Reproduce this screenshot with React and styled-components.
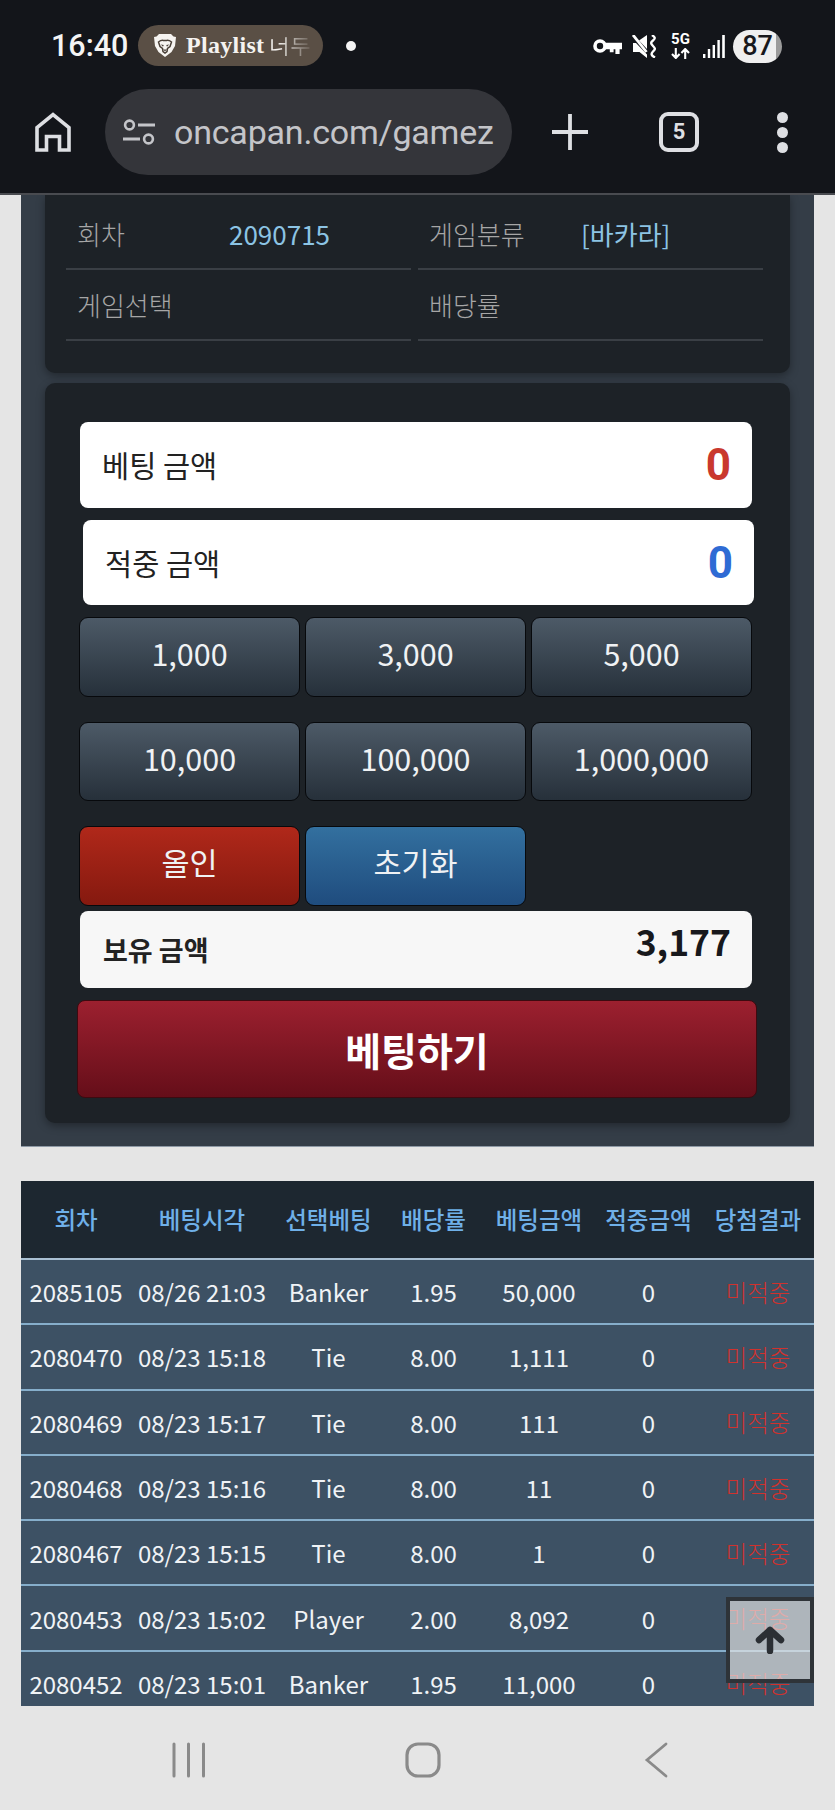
import React from "react";
import styled, {createGlobalStyle} from "styled-components";

const GlobalStyle = createGlobalStyle`
  html, body {
    margin: 0;
    padding: 0;
    background: #e5e5e5;
  }
  * {
    box-sizing: border-box;
  }
`;

const CHIPS = ["1,000", "3,000", "5,000", "10,000", "100,000", "1,000,000"];
const COLUMNS = ["회차", "베팅시각", "선택베팅", "배당률", "베팅금액", "적중금액", "당첨결과"];
const HISTORY = [
    ["2085105", "08/26 21:03", "Banker", "1.95", "50,000", "0"],
    ["2080470", "08/23 15:18", "Tie", "8.00", "1,111", "0"],
    ["2080469", "08/23 15:17", "Tie", "8.00", "111", "0"],
    ["2080468", "08/23 15:16", "Tie", "8.00", "11", "0"],
    ["2080467", "08/23 15:15", "Tie", "8.00", "1", "0"],
    ["2080453", "08/23 15:02", "Player", "2.00", "8,092", "0"],
    ["2080452", "08/23 15:01", "Banker", "1.95", "11,000", "0"],
];

const App = () => {
    return (
        <Screen>
            <GlobalStyle/>
            <BrowserHeader>
                <StatusBar>
                    <Clock>16:40</Clock>
                    <MediaPill>
                        <BraveIcon/>
                        <PillTitle>Playlist</PillTitle>
                        <PillFade>너두</PillFade>
                    </MediaPill>
                    <StatusDot/>
                    <StatusIcons>
                        <KeyIcon/>
                        <MuteIcon/>
                        <Network>
                            <NetworkLabel>5G</NetworkLabel>
                            <ArrowsIcon/>
                        </Network>
                        <SignalIcon/>
                        <Battery>87</Battery>
                    </StatusIcons>
                </StatusBar>
                <Toolbar>
                    <HomeIcon/>
                    <UrlBar>
                        <TuneIcon/>
                        <UrlText>oncapan.com/gamez</UrlText>
                    </UrlBar>
                    <PlusIcon/>
                    <TabCount>5</TabCount>
                    <MenuDots><i/><i/><i/></MenuDots>
                </Toolbar>
            </BrowserHeader>

            <Content>
                <Panel>
                    <InfoCard>
                        <InfoRow>
                            <InfoCell><InfoLabel>회차</InfoLabel><InfoValue>2090715</InfoValue></InfoCell>
                            <InfoCell><InfoLabel>게임분류</InfoLabel><InfoValue>[바카라]</InfoValue></InfoCell>
                        </InfoRow>
                        <InfoRow>
                            <InfoCell><InfoLabel>게임선택</InfoLabel><InfoValue/></InfoCell>
                            <InfoCell><InfoLabel>배당률</InfoLabel><InfoValue/></InfoCell>
                        </InfoRow>
                    </InfoCard>

                    <BetCard>
                        <AmountBox>
                            <AmountLabel>베팅 금액</AmountLabel>
                            <AmountValue $color="#c9382e">0</AmountValue>
                        </AmountBox>
                        <AmountBox $shift>
                            <AmountLabel>적중 금액</AmountLabel>
                            <AmountValue $color="#2f6bd4">0</AmountValue>
                        </AmountBox>
                        <ChipGrid>
                            {CHIPS.map(chip => <Chip key={chip}>{chip}</Chip>)}
                            <Chip $from="#b0281a" $to="#85190f">올인</Chip>
                            <Chip $from="#33709f" $to="#1f4c7e">초기화</Chip>
                        </ChipGrid>
                        <HoldBox>
                            <HoldLabel>보유 금액</HoldLabel>
                            <HoldValue>3,177</HoldValue>
                        </HoldBox>
                        <BetButton>베팅하기</BetButton>
                    </BetCard>
                </Panel>

                <HistoryTable>
                    <HeadRow>
                        {COLUMNS.map(title => <HeadCell key={title}>{title}</HeadCell>)}
                    </HeadRow>
                    {HISTORY.map(row => (
                        <BodyRow key={row[0]}>
                            {row.map((value, i) => <BodyCell key={i}>{value}</BodyCell>)}
                            <MissCell>미적중</MissCell>
                        </BodyRow>
                    ))}
                </HistoryTable>

                <TopButton><UpArrowIcon/></TopButton>
            </Content>

            <NavBar>
                <RecentIcon/>
                <NavHomeIcon/>
                <BackIcon/>
            </NavBar>
        </Screen>
    )
}

const BraveIcon = () => (
    <PillSvg viewBox="0 0 22 23">
        <path fill="#f6f4f1" d="M5 0h12l2.500 2.500L22 3l-1 9-3.500 6L11 23l-6.500-5L1 12 0 3l2.500-.5z"/>
        <path fill="none" stroke="#4a4038" strokeWidth="1.500" d="M4.500 8c3-2.500 3.800-1.500 6.500-1.500S14.500 5.500 17.500 8L16 12.500l-2.500 2-.5 3-2 1.500-2-1.500-.5-3-2.500-2z"/>
        <path fill="#4a4038" d="M6.800 10.500l3 .5-.8 1.800zM15.200 10.500l-3 .5.800 1.800zM9 15.500h4L11 17.300z"/>
    </PillSvg>
);

const KeyIcon = () => (
    <KeySvg viewBox="0 0 29 15">
        <circle cx="7" cy="7" r="5" fill="none" stroke="#fff" strokeWidth="3.600"/>
        <path fill="#fff" d="M12 3.800h17v6.400h-2.400V15h-4.200v-4.800h-1.800v3h-3.800v-3H12z"/>
    </KeySvg>
);

const MuteIcon = () => (
    <MuteSvg viewBox="0 0 24 23">
        <path fill="#fff" d="M1 8h3L15 19.500V23L7.500 17H1zM7 5.500L15 0v14z"/>
        <path stroke="#fff" strokeWidth="2.800" d="M1 0l13.500 17"/>
        <path fill="none" stroke="#fff" strokeWidth="2.400" d="M20 0c3.500 2.500 3.500 3.500 1 5.500s-2.500 3 0 5.500 2.500 3 0 5.500-1.500 4 2 6"/>
    </MuteSvg>
);

const ArrowsIcon = () => (
    <ArrowSvg viewBox="0 0 19 11">
        <path fill="none" stroke="#fff" strokeWidth="2.100" d="M4.800 0v10M1 6l3.800 4L8.600 6M14.200 11V1M10.400 5l3.800-4L18 5"/>
    </ArrowSvg>
);

const SignalIcon = () => (
    <SignalSvg viewBox="0 0 22 23">
        <rect x="0" y="19" width="2.400" height="4" fill="#fff"/>
        <rect x="4.800" y="14" width="2.400" height="9" fill="#fff"/>
        <rect x="9.600" y="10" width="2.400" height="13" fill="#fff"/>
        <rect x="14.400" y="5" width="2.400" height="18" fill="#fff"/>
        <rect x="19.200" y="0" width="2.600" height="23" fill="#fff"/>
    </SignalSvg>
);

const HomeIcon = () => (
    <ToolbarSvg $width={36} $height={40} viewBox="0 0 36 40">
        <path fill="none" stroke="#dedfe3" strokeWidth="3.600" d="M2 38V15.500L18 2.500l16 13V38h-9.500V24.500h-13V38z"/>
    </ToolbarSvg>
);

const TuneIcon = () => (
    <TuneSvg viewBox="0 0 32 26">
        <circle cx="6.500" cy="6" r="4.400" fill="none" stroke="#c4c5c9" strokeWidth="2.600"/>
        <path stroke="#c4c5c9" strokeWidth="2.800" d="M15 6h17M0 20h17"/>
        <circle cx="25.500" cy="20" r="4.400" fill="none" stroke="#c4c5c9" strokeWidth="2.600"/>
    </TuneSvg>
);

const PlusIcon = () => (
    <ToolbarSvg $width={36} $height={36} viewBox="0 0 36 36">
        <path stroke="#dedfe3" strokeWidth="3.800" d="M18 0v36M0 18h36"/>
    </ToolbarSvg>
);

const UpArrowIcon = () => (
    <ArrowUpSvg viewBox="0 0 30 28">
        <path fill="none" stroke="#2b2f34" strokeWidth="6.500" strokeLinecap="round" strokeLinejoin="round" d="M15 25V4M4 14L15 4l11 10"/>
    </ArrowUpSvg>
);

const RecentIcon = () => (
    <NavSvg $left={172} viewBox="0 0 34 36" $width={34}>
        <path stroke="#8a8a8a" strokeWidth="3" strokeLinecap="round" d="M2 2v32M16.500 2v32M31.500 2v32"/>
    </NavSvg>
);

const NavHomeIcon = () => (
    <NavSvg $left={199} viewBox="0 0 36 36" $width={36}>
        <rect x="2" y="2" width="32" height="32" rx="11" fill="none" stroke="#8a8a8a" strokeWidth="3.200"/>
    </NavSvg>
);

const BackIcon = () => (
    <NavSvg $left={203} viewBox="0 0 24 36" $width={24}>
        <path fill="none" stroke="#8a8a8a" strokeWidth="2.800" strokeLinecap="round" d="M22 2L3 18l19 16"/>
    </NavSvg>
);

const Screen = styled.div`
  width: 835px;
  height: 1810px;
  overflow: hidden;
  display: flex;
  flex-direction: column;
  background: #e5e5e5;
  font-family: "Noto Sans CJK KR", "Noto Sans", sans-serif;
`;

const BrowserHeader = styled.header`
  height: 195px;
  flex: none;
  background: #13151a;
  border-bottom: 2px solid #494b50;
`;

const StatusBar = styled.div`
  height: 89px;
  padding: 25px 53px 0 51px;
  display: flex;
  align-items: flex-start;
  font-family: Roboto, sans-serif;
`;

const Clock = styled.span`
  width: 87px;
  height: 41px;
  line-height: 41px;
  font-size: 30.500px;
  font-weight: 500;
  color: #f4f4f4;
`;

const MediaPill = styled.div`
  width: 185px;
  height: 41px;
  border-radius: 21px;
  background: #5a4f45;
  display: flex;
  align-items: center;
  padding-left: 16px;
`;

const PillSvg = styled.svg`
  width: 22px;
  height: 23px;
  flex: none;
`;

const PillTitle = styled.span`
  margin-left: 10px;
  font-family: "Liberation Serif", serif;
  font-weight: 700;
  font-size: 24px;
  letter-spacing: 0.3px;
  color: #f5f3f0;
`;

const PillFade = styled.span`
  margin-left: 5px;
  font-size: 21px;
  color: #f5f3f0;
  -webkit-mask-image: linear-gradient(90deg, #000 20%, rgba(0, 0, 0, 0.1) 100%);
  mask-image: linear-gradient(90deg, #000 20%, rgba(0, 0, 0, 0.1) 100%);
`;

const StatusDot = styled.span`
  width: 10px;
  height: 10px;
  margin: 16px 0 0 23px;
  border-radius: 50%;
  background: #f4f4f4;
`;

const StatusIcons = styled.div`
  margin-left: auto;
  display: flex;
  align-items: center;
  height: 37px;
  margin-top: 3px;
`;

const KeySvg = styled.svg`
  width: 29px;
  height: 15px;
  margin-right: 10px;
  overflow: visible;
`;

const MuteSvg = styled.svg`
  width: 24px;
  height: 23px;
  margin-right: 15px;
`;

const Network = styled.div`
  width: 19px;
  margin-right: 13px;
  display: flex;
  flex-direction: column;
  align-items: center;
  gap: 3px;
`;

const NetworkLabel = styled.span`
  height: 11px;
  line-height: 11px;
  font-size: 15px;
  font-weight: 700;
  color: #fff;
`;

const ArrowSvg = styled.svg`
  width: 19px;
  height: 11px;
`;

const SignalSvg = styled.svg`
  width: 22px;
  height: 23px;
  margin-right: 8px;
`;

const Battery = styled.span`
  width: 49px;
  height: 33px;
  border-radius: 17px;
  background: linear-gradient(90deg, #efefef 88%, #9b9b9b 88%);
  color: #17181c;
  text-align: center;
  line-height: 33px;
  font-size: 27px;
  font-weight: 500;
`;

const Toolbar = styled.div`
  height: 86px;
  padding-left: 35px;
  display: flex;
  align-items: center;
`;

const ToolbarSvg = styled.svg`
  width: ${props => props.$width}px;
  height: ${props => props.$height}px;
  flex: none;
`;

const UrlBar = styled.div`
  width: 407px;
  height: 86px;
  margin: 0 40px 0 34px;
  padding: 0 8px 0 18px;
  border-radius: 43px;
  background: #34353a;
  display: flex;
  align-items: center;
  gap: 19px;
`;

const TuneSvg = styled.svg`
  width: 32px;
  height: 26px;
  flex: none;
`;

const UrlText = styled.span`
  white-space: nowrap;
  font-family: Roboto, sans-serif;
  font-size: 34px;
  letter-spacing: -0.2px;
  color: #c4c5c9;
`;

const TabCount = styled.span`
  width: 40px;
  height: 40px;
  margin-left: 71px;
  border: 4px solid #dedfe3;
  border-radius: 9px;
  color: #dedfe3;
  font-family: Roboto, sans-serif;
  font-size: 22px;
  font-weight: 700;
  text-align: center;
  line-height: 32px;
`;

const MenuDots = styled.div`
  margin-left: 78px;
  display: flex;
  flex-direction: column;
  gap: 4px;

  i {
    width: 11px;
    height: 11px;
    border-radius: 50%;
    background: #dedfe3;
  }
`;

const Content = styled.main`
  position: relative;
  height: 1511px;
  flex: none;
  overflow: hidden;
  padding: 0 21px;
`;

const Panel = styled.section`
  width: 793px;
  padding: 0 24px 23px;
  background: #343d47;
  border-bottom: 1px solid #8e99a5;
`;

const InfoCard = styled.div`
  height: 178px;
  padding: 4px 21px 0;
  border-radius: 0 0 10px 10px;
  background: #1d2227;
  box-shadow: 0 3px 8px rgba(0, 0, 0, 0.35);
`;

const InfoRow = styled.div`
  height: 71px;
  display: grid;
  grid-template-columns: 345px 345px;
  gap: 7px;
`;

const InfoCell = styled.div`
  display: flex;
  align-items: center;
  padding-left: 11px;
  border-bottom: 2px solid #3a3f45;
`;

const InfoLabel = styled.span`
  width: 152px;
  font-size: 26px;
  font-weight: 300;
  color: #a6a6a6;
`;

const InfoValue = styled.span`
  font-size: 26px;
  font-weight: 400;
  color: #8cc4e4;
`;

const BetCard = styled.div`
  height: 740px;
  margin-top: 10px;
  padding-top: 39px;
  border-radius: 10px;
  background: #1d2227;
  box-shadow: 0 3px 8px rgba(0, 0, 0, 0.35);
`;

const AmountBox = styled.div`
  width: ${props => props.$shift ? 671 : 672}px;
  height: ${props => props.$shift ? 85 : 86}px;
  margin: 0 0 12px ${props => props.$shift ? 38 : 35}px;
  padding: 0 21px 0 22px;
  border-radius: 8px;
  background: #fff;
  display: flex;
  align-items: center;
  justify-content: space-between;
`;

const AmountLabel = styled.span`
  margin-top: -2px;
  font-size: 29.500px;
  font-weight: 400;
  color: #222;
`;

const AmountValue = styled.span`
  font-family: Roboto, sans-serif;
  font-size: 44px;
  font-weight: 700;
  color: ${props => props.$color};
`;

const ChipGrid = styled.div`
  margin-left: 34px;
  display: grid;
  grid-template-columns: repeat(3, 221px);
  grid-auto-rows: 79.500px;
  column-gap: 5px;
  row-gap: 25px;
`;

const Chip = styled.button`
  border: 1.500px solid #07090c;
  border-radius: 9px;
  padding: 0 0 7px;
  background: linear-gradient(180deg, ${props => props.$from || "#4d5a67"}, ${props => props.$to || "#26303a"});
  color: #f0f2f4;
  font-family: inherit;
  font-size: 30.500px;
  font-weight: 400;
`;

const HoldBox = styled.div`
  width: 672px;
  height: 77px;
  margin: 5.500px 0 12px 35px;
  padding: 0 21px 0 23px;
  border-radius: 8px;
  background: #f7f7f7;
  display: flex;
  align-items: center;
  justify-content: space-between;
`;

const HoldLabel = styled.span`
  font-size: 27px;
  font-weight: 700;
  color: #222;
`;

const HoldValue = styled.span`
  margin-top: -18px;
  font-size: 35.500px;
  font-weight: 700;
  color: #17181c;
`;

const BetButton = styled.button`
  display: block;
  width: 680px;
  height: 98px;
  margin-left: 32px;
  padding: 0;
  border: 1px solid #3d0a10;
  border-radius: 8px;
  background: linear-gradient(180deg, #9c202f, #650e19);
  color: #fff;
  font-family: inherit;
  font-size: 39px;
  font-weight: 700;
`;

const HistoryTable = styled.div`
  width: 793px;
  margin-top: 34px;
`;

const HeadRow = styled.div`
  height: 79px;
  padding-bottom: 2px;
  display: grid;
  grid-template-columns: 110px 142px 111px 99px 112px 107px 112px;
  background: #1d2730;
  border-bottom: 2px solid #a9c0d3;
`;

const HeadCell = styled.div`
  display: flex;
  align-items: center;
  justify-content: center;
  white-space: nowrap;
  font-size: 23.500px;
  font-weight: 500;
  color: #6fb0e8;
`;

const BodyRow = styled.div`
  height: 65.300px;
  display: grid;
  grid-template-columns: 110px 142px 111px 99px 112px 107px 112px;
  background: #3d5164;
  border-bottom: 2px solid #86aecb;
`;

const BodyCell = styled.div`
  display: flex;
  align-items: center;
  justify-content: center;
  white-space: nowrap;
  font-size: 24px;
  font-weight: 400;
  color: #f0f3f6;
`;

const MissCell = styled(BodyCell)`
  font-size: 23.500px;
  font-weight: 300;
  color: #d0322e;
`;

const TopButton = styled.button`
  position: absolute;
  left: 726px;
  top: 1402px;
  width: 88px;
  height: 86px;
  padding: 0;
  display: flex;
  align-items: center;
  justify-content: center;
  border: 4px solid #2e3338;
  background: rgba(229, 229, 229, 0.68);
`;

const ArrowUpSvg = styled.svg`
  width: 30px;
  height: 28px;
`;

const NavBar = styled.nav`
  flex: 1;
  padding: 36px 0 0 172px;
  display: flex;
  align-items: flex-start;
  background: #e5e5e5;
`;

const NavSvg = styled.svg`
  width: ${props => props.$width}px;
  height: 36px;
  margin-left: ${props => props.$left === 172 ? 0 : props.$left}px;
  flex: none;
`;

export default App;
